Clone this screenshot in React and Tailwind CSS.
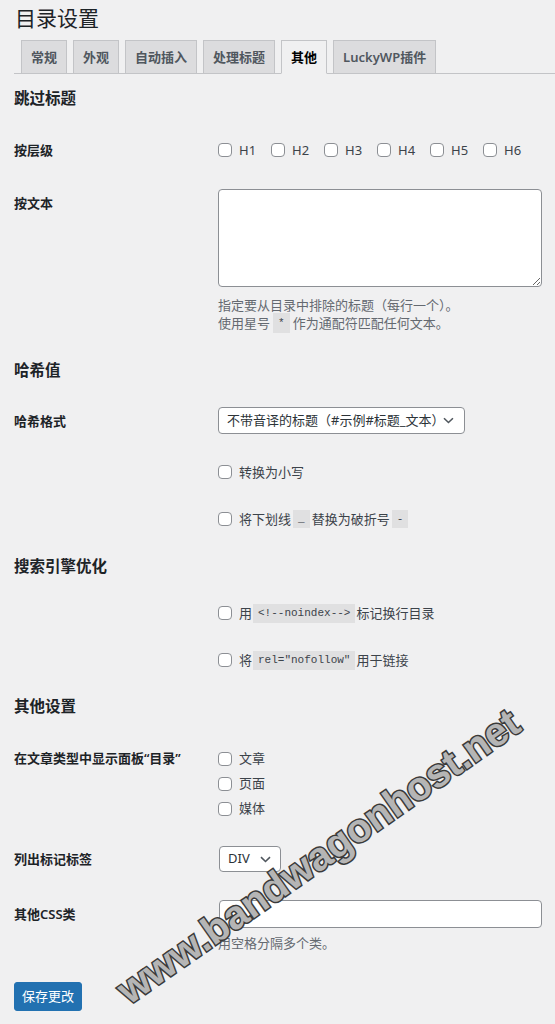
import { useState } from "react";

const tabs = ["常规", "外观", "自动插入", "处理标题", "其他", "LuckyWP插件"];

function Box() {
  return <span className="inline-block w-[14px] h-[14px] shrink-0 rounded-[4px] border border-[#8c8f94] bg-white" />;
}

function Check({ children, className = "" }) {
  return (
    <div className={`flex items-center gap-[7px] text-[13px] text-[#3c434a] ${className}`}>
      <Box />
      <span className="flex items-center">{children}</span>
    </div>
  );
}

function Code({ children, className = "" }) {
  return (
    <code className={`inline-block bg-[#e0e0e1] px-[5px] text-[11px] text-[#3c434a] font-['Liberation_Mono',monospace] ${className}`}>
      {children}
    </code>
  );
}

function Chevron() {
  return (
    <svg width="11" height="7" viewBox="0 0 11 7" fill="none">
      <path d="M1 1.2l4.5 4.3 4.5-4.3" stroke="#50575e" strokeWidth="1.6" />
    </svg>
  );
}

function Heading({ children, className = "" }) {
  return <h2 className={`h-5 leading-5 text-[15.5px] font-semibold text-[#1d2327] ${className}`}>{children}</h2>;
}

function Label({ children, className = "" }) {
  return <div className={`w-[204px] shrink-0 text-[13px] font-semibold text-[#1d2327] ${className}`}>{children}</div>;
}

export default function App() {
  const [active] = useState(4);

  return (
    <div className="relative min-h-screen overflow-hidden bg-[#f0f0f1] pl-[14px] pb-[20px] font-['Noto_Sans','Noto_Sans_CJK_SC',sans-serif]">
      {/* page title */}
      <h1 className="h-[36px] pl-[1px] text-[21px] font-normal leading-[36px] text-[#1d2327]">目录设置</h1>

      {/* tabs */}
      <div className="mt-[4px] flex items-end gap-[6px] border-b border-[#c3c4c7] pl-[7px]">
        {tabs.map((t, i) => (
          <div
            key={t}
            className={
              i === active
                ? "-mb-px h-[34px] border border-[#c3c4c7] border-b-[#f0f0f1] bg-[#f0f0f1] px-[9px] text-[13px] font-semibold leading-[33px] text-[#000]"
                : "-mb-px h-[34px] border border-[#c3c4c7] bg-[#dcdcde] px-[9px] text-[13px] font-semibold leading-[33px] text-[#50575e]"
            }
          >
            {t}
          </div>
        ))}
      </div>

      {/* skip headings */}
      <Heading className="mt-[14px]">跳过标题</Heading>

      <div className="mt-[32px] flex h-5 items-center">
        <Label className="leading-5">按层级</Label>
        <div className="flex">
          {["H1", "H2", "H3", "H4", "H5", "H6"].map((h) => (
            <Check key={h} className="w-[53px] leading-5">{h}</Check>
          ))}
        </div>
      </div>

      <div className="mt-[29px] flex">
        <Label className="pt-[4px] leading-5">按文本</Label>
        <div>
          <textarea className="block h-[98px] w-[324px] rounded-[4px] border border-[#8c8f94] bg-white" />
          <div className="mt-[9px] text-[13px] leading-[18px] text-[#646970]">
            <div>指定要从目录中排除的标题（每行一个）。</div>
            <div className="flex h-[18px] items-center">
              使用星号<Code className="mx-[3px] leading-[20px]">*</Code>作为通配符匹配任何文本。
            </div>
          </div>
        </div>
      </div>

      {/* hash */}
      <Heading className="mt-[28px]">哈希值</Heading>

      <div className="mt-[27px] flex items-center">
        <Label className="leading-5">哈希格式</Label>
        <div className="flex h-[27px] w-[247px] items-center justify-between rounded-[4px] border border-[#8c8f94] bg-white pl-[8px] pr-[10px] text-[13px] text-[#2c3338]">
          <span>不带音译的标题（#示例#标题_文本）</span>
          <Chevron />
        </div>
      </div>

      <div className="mt-[28px] flex h-5 items-center">
        <Label />
        <Check className="leading-5">转换为小写</Check>
      </div>

      <div className="mt-[27px] flex h-5 items-center">
        <Label />
        <Check className="leading-5">
          将下划线<Code className="mx-[2px] leading-[18px]">_</Code>替换为破折号<Code className="ml-[2px] leading-[18px]">-</Code>
        </Check>
      </div>

      {/* seo */}
      <Heading className="mt-[27px]">搜索引擎优化</Heading>

      <div className="mt-[27px] flex h-5 items-center">
        <Label />
        <Check className="leading-5">
          用<Code className="mx-[1px] leading-[19px]">&lt;!--noindex--&gt;</Code>标记换行目录
        </Check>
      </div>

      <div className="mt-[27px] flex h-5 items-center">
        <Label />
        <Check className="leading-5">
          将<Code className="mx-[1px] leading-[19px]">rel="nofollow"</Code>用于链接
        </Check>
      </div>

      {/* misc */}
      <Heading className="mt-[26px]">其他设置</Heading>

      <div className="mt-[30px] flex">
        <Label className="leading-[25px]">在文章类型中显示面板“目录”</Label>
        <div>
          <Check className="h-[25px]">文章</Check>
          <Check className="h-[25px]">页面</Check>
          <Check className="h-[25px]">媒体</Check>
        </div>
      </div>

      <div className="mt-[25px] flex items-center">
        <Label className="leading-5">列出标记标签</Label>
        <div className="ml-[1px] flex h-[26px] w-[62px] items-center justify-between rounded-[4px] border border-[#8c8f94] bg-white pl-[8px] pr-[9px] text-[13px] text-[#2c3338]">
          <span>DIV</span>
          <Chevron />
        </div>
      </div>

      <div className="mt-[28px] flex items-center">
        <Label className="leading-5">其他CSS类</Label>
        <input className="ml-[1px] h-[28px] w-[323px] rounded-[4px] border border-[#8c8f94] bg-white" />
      </div>
      <div className="mt-[6px] flex">
        <Label />
        <div className="text-[13px] leading-[18px] text-[#646970]">用空格分隔多个类。</div>
      </div>

      <button className="mt-[30px] h-[29px] w-[68px] rounded-[3px] border border-[#2271b1] bg-[#2271b1] text-[13px] leading-[27px] text-white">
        保存更改
      </button>

      {/* watermark */}
      <span className="pointer-events-none absolute left-[318px] top-[856px] -translate-x-1/2 -translate-y-1/2 -rotate-35 whitespace-nowrap font-['Liberation_Sans',sans-serif] text-[40px] font-bold text-[#b5b5b5] [-webkit-text-stroke:3px_#3a3a3a] [paint-order:stroke_fill]">
        www.bandwagonhost.net
      </span>
    </div>
  );
}
